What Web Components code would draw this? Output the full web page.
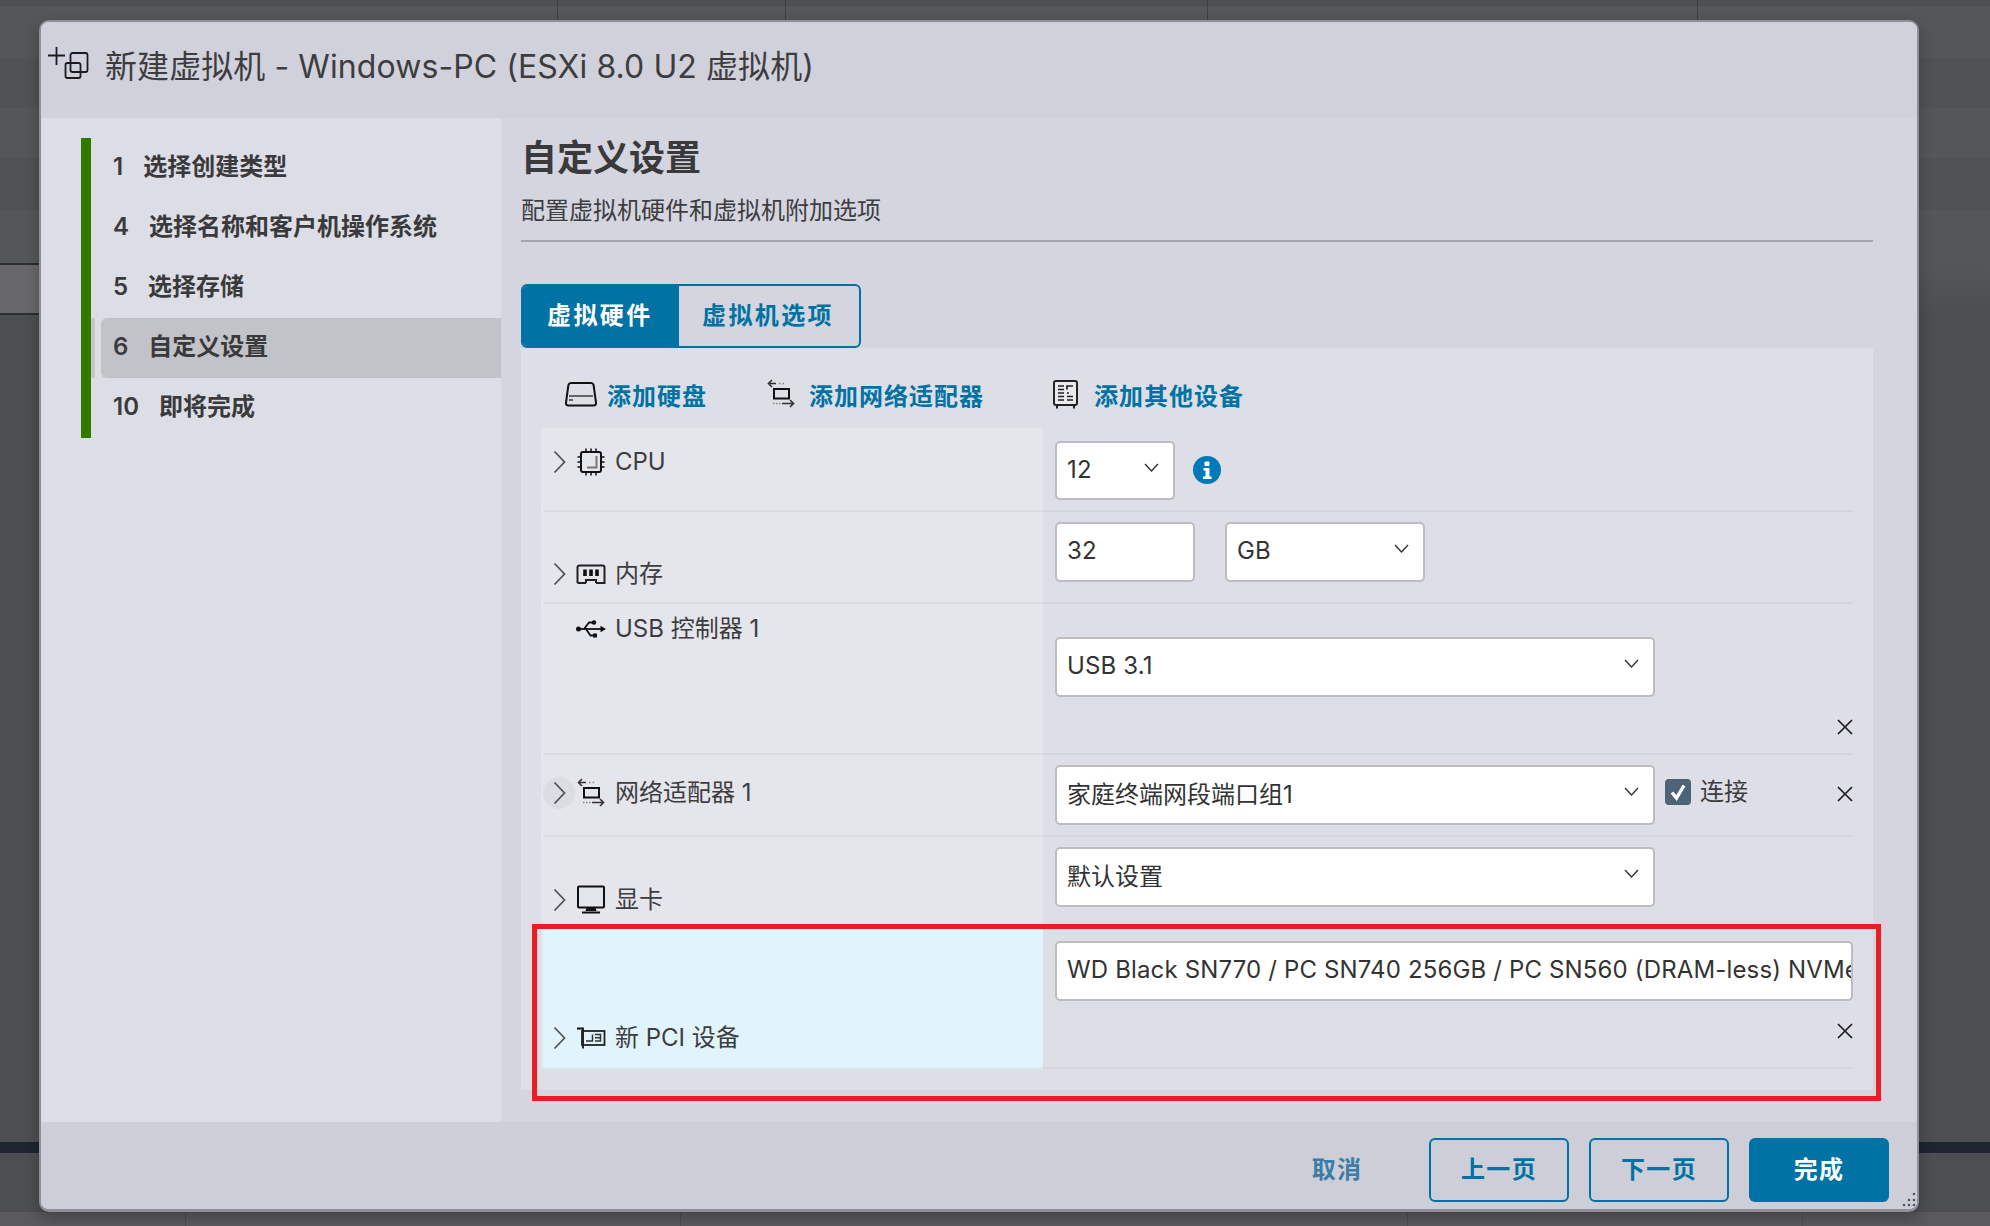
<!DOCTYPE html>
<html lang="zh"><head><meta charset="utf-8"><title>新建虚拟机</title>
<style>html,body{margin:0;padding:0;background:#4d4e52}</style></head>
<body>
<vm-app>
 <vm-dialog>
  <span slot="title">新建虚拟机 - Windows-PC (ESXi 8.0 U2 虚拟机)</span>
  <wizard-steps slot="steps">
   <wizard-step num="1">选择创建类型</wizard-step>
   <wizard-step num="4">选择名称和客户机操作系统</wizard-step>
   <wizard-step num="5">选择存储</wizard-step>
   <wizard-step num="6" active>自定义设置</wizard-step>
   <wizard-step num="10">即将完成</wizard-step>
  </wizard-steps>
  <hw-panel>
   <tool-link slot="tools" style="margin-left:24px;--ig:10px"><vm-icon slot="icon" name="disk" style="--w:32px;--h:26px"></vm-icon>添加硬盘</tool-link>
   <tool-link slot="tools" style="margin-left:59px;--ig:13px"><vm-icon slot="icon" name="net" style="--w:30px;--h:30px"></vm-icon>添加网络适配器</tool-link>
   <tool-link slot="tools" style="margin-left:69px;--ig:16px"><vm-icon slot="icon" name="other" style="--w:25px;--h:29px"></vm-icon>添加其他设备</tool-link>

   <hw-row chevron style="--h:84px;--lt:18px;--rt:13px">
     <vm-icon slot="icon" name="cpu"></vm-icon><span slot="label">CPU</span>
     <vm-select style="width:120px;height:59px">12</vm-select>
     <vm-icon name="info" style="--w:28px;--h:28px;margin:15px 0 0 18px"></vm-icon>
   </hw-row>
   <hw-row chevron style="--h:92px;--lt:46px;--rt:10px">
     <vm-icon slot="icon" name="mem"></vm-icon><span slot="label">内存</span>
     <vm-select plain style="width:140px;height:60px">32</vm-select>
     <vm-select style="width:200px;height:60px;margin-left:30px">GB</vm-select>
   </hw-row>
   <hw-row style="--h:151px;--lt:9px;--rt:33px">
     <vm-icon slot="icon" name="usb"></vm-icon><span slot="label">USB 控制器 1</span>
     <div style="width:798px;display:flex;flex-direction:column">
       <vm-select style="width:600px;height:60px">USB 3.1</vm-select>
       <close-x style="margin-top:15px"></close-x>
     </div>
   </hw-row>
   <hw-row chevron hover style="--h:82px;--lt:22px;--rt:10px">
     <vm-icon slot="icon" name="net"></vm-icon><span slot="label">网络适配器 1</span>
     <vm-select style="width:600px;height:60px;--pb:5px;--ls:0">家庭终端网段端口组1</vm-select>
     <check-label>连接</check-label>
     <close-x style="margin:14px 0 0 auto;align-self:flex-start"></close-x>
   </hw-row>
   <hw-row chevron style="--h:92px;--lt:47px;--rt:10px">
     <vm-icon slot="icon" name="mon"></vm-icon><span slot="label">显卡</span>
     <vm-select style="width:600px;height:60px;--pb:5px;--ls:0">默认设置</vm-select>
   </hw-row>
   <hw-row chevron highlight style="--h:140px;--lt:93px;--rt:12px">
     <vm-icon slot="icon" name="pci"></vm-icon><span slot="label">新 PCI 设备</span>
     <div style="width:798px;display:flex;flex-direction:column">
       <vm-select plain style="width:798px;height:60px">WD Black SN770 / PC SN740 256GB / PC SN560 (DRAM-less) NVMe SSD</vm-select>
       <close-x style="margin-top:15px"></close-x>
     </div>
   </hw-row>
  </hw-panel>
  <vm-button slot="footer" kind="link" style="margin-right:2px;padding-bottom:5px">取消</vm-button>
  <vm-button slot="footer" kind="outline">上一页</vm-button>
  <vm-button slot="footer" kind="outline">下一页</vm-button>
  <vm-button slot="footer" kind="solid">完成</vm-button>
 </vm-dialog>
 <annot-box></annot-box>
</vm-app>
<script>
const FONT='"Inter","Noto Sans CJK SC","Noto Sans",sans-serif';
function def(name,css,html,extra){
  class E extends HTMLElement{
    constructor(){super();const r=this.attachShadow({mode:'open'});
      r.innerHTML='<style>'+css+'</style>'+(typeof html==='function'?html(this):html);}
    connectedCallback(){ if(extra) extra(this); }
  }
  customElements.define(name,E);
}
const ICONS={
 add:[44,34,`<g fill="none" stroke="#1c1c1f" stroke-width="1.8"><path d="M1 8.5h17M9.5 0v18"/><rect x="23.5" y="6" width="17" height="19" rx="2"/><rect x="18.5" y="16" width="15" height="15" rx="2"/></g>`],
 disk:[32,26,`<path d="M6 2h20q2 0 2.6 2L31 21.5q.3 3-2.5 3H3.500q-2.800 0-2.500-3L3.400 4Q4 2 6 2z" fill="none" stroke="#111" stroke-width="2"/><path d="M4 15h24" stroke="#666" stroke-width="2"/><path d="M4 19h4" stroke="#666" stroke-width="2"/>`],
 net:[30,30,`<g fill="none" stroke="#333" stroke-width="1.6"><path d="M10 4.500H2.500M6 1 2.500 4.500 6 8"/><path d="M13 4.500h1.500M16.500 4.500h1.500" stroke="#888"/><rect x="8" y="10" width="15" height="9.500" stroke="#111" stroke-width="2"/><path d="M7 24.500h1.500M10 24.500h1.500M13 24.500h1.500" stroke="#888"/><path d="M16 24.500h11.500M24 21l3.500 3.500L24 28"/></g>`],
 other:[25,29,`<rect x="1" y="1" width="23" height="24" rx="2" fill="#e9e9ee" stroke="#222" stroke-width="2"/><path d="M4 25v3.500M21 25v3.500" stroke="#222" stroke-width="2"/><path d="M5 6h6M5 9.500h6M5 13h6M5 16.500h6M5 20h6M14 13h2M14 16.500h6M14 20h6M14 9.500V6h6" stroke="#222" stroke-width="1.700" fill="none"/>`],
 cpu:[30,30,`<rect x="5" y="5" width="20" height="20" rx="2" fill="none" stroke="#111" stroke-width="2"/><path d="M10 1.500v3M15 1.500v3M20 1.500v3M10 25v3.500M15 25v3.500M20 25v3.500M1.500 10h3M1.500 15h3M1.500 20h3M25 10h3.500M25 15h3.500M25 20h3.500" stroke="#111" stroke-width="1.500"/><path d="M20.500 9v11.500H11" fill="none" stroke="#777" stroke-width="2"/>`],
 mem:[30,20,`<path d="M1.500 19V3.500q0-2 2-2h23q2 0 2 2V19h-8.500M1.500 19H10" fill="none" stroke="#222" stroke-width="2"/><path d="M10 19v-3h10v3" fill="none" stroke="#222" stroke-width="2"/><path d="M9 5.500v6.500M15 5.500v6.500M21 5.500v6.500" stroke="#111" stroke-width="3.600"/>`],
 usb:[30,20,`<circle cx="2.500" cy="10" r="2.500" fill="#111"/><path d="M3 10h22" stroke="#111" stroke-width="1.800"/><path d="M30 10l-5.500-3.200v6.400z" fill="#111"/><path d="M8 10l5-6.500h4M10 10l4.500 6.500H18" fill="none" stroke="#111" stroke-width="1.800"/><circle cx="18" cy="3.500" r="2.200" fill="#111"/><rect x="17" y="14.500" width="4" height="4" fill="#111"/>`],
 mon:[30,30,`<rect x="2" y="1.500" width="26" height="21" rx="1" fill="none" stroke="#111" stroke-width="2"/><path d="M10.500 23h9l1 3h-11z" fill="#111"/><path d="M6 27.500h18" stroke="#111" stroke-width="2"/>`],
 pci:[30,22,`<path d="M1 1.500h6v20" fill="none" stroke="#111" stroke-width="1.800"/><rect x="6" y="4" width="22.500" height="14" fill="none" stroke="#222" stroke-width="1.800"/><path d="M10 14h6.500V7.500M19 7.500h5.500v6.500H19M19 10.700h5.500" fill="none" stroke="#333" stroke-width="1.500"/>`],
 info:[28,28,`<circle cx="14" cy="14" r="14" fill="#0079b8"/><rect x="11.500" y="5.500" width="5" height="4.500" rx="1" fill="#fff"/><path d="M10.500 12h6v8.500h2V23h-8.500v-2.500h2.500V14.500h-2z" fill="#fff"/>`],
 chev:[13,24,`<path d="M1.500 1.500 11.500 12 1.500 22.500" fill="none" stroke="#555" stroke-width="1.800"/>`],
 down:[15,9,`<path d="M1 1l6.500 7L14 1" fill="none" stroke="#333" stroke-width="1.400"/>`],
 x:[16,16,`<path d="M1 1l14 14M15 1 1 15" stroke="#1c1c1f" stroke-width="1.700" fill="none"/>`],
 check:[26,26,`<rect width="26" height="26" rx="4" fill="#4d6478"/><path d="M7 13.500l4.500 5.500L19 6.500" fill="none" stroke="#fff" stroke-width="3.400"/>`],
 grip:[14,16,`<g fill="#54555c"><circle cx="12" cy="2" r="1.300"/><circle cx="7" cy="8" r="1.300"/><circle cx="12" cy="8" r="1.300"/><circle cx="2" cy="13" r="1.300"/><circle cx="7" cy="13" r="1.300"/><circle cx="12" cy="13" r="1.300"/></g>`]
};
def('vm-icon',':host{display:inline-flex;flex:none;align-items:center;justify-content:center;width:var(--w,30px);height:var(--h,30px)}svg{display:block}',
 h=>{const i=ICONS[h.getAttribute('name')];return `<svg xmlns="http://www.w3.org/2000/svg" width="${i[0]}" height="${i[1]}" viewBox="0 0 ${i[0]} ${i[1]}">${i[2]}</svg>`;});

def('vm-app',`:host{display:block;position:relative;box-sizing:border-box;width:1990px;height:1226px;padding:20px 71px 14px 39px;overflow:hidden;
 font-family:${FONT};font-size:24px;color:#3a3a3c;
 background:
  linear-gradient(#2b2d30,#2b2d30) 0 263px/39px 2px no-repeat,
  linear-gradient(#2b2d30,#2b2d30) 0 313px/39px 2px no-repeat,
  linear-gradient(#68686a,#68686a) 0 265px/39px 48px no-repeat,
  linear-gradient(#1c2530,#1c2530) 0 1142px/100% 11px no-repeat,
  linear-gradient(#3e3f44,#3e3f44) 557px 0/1px 20px no-repeat,
  linear-gradient(#3e3f44,#3e3f44) 785px 0/1px 20px no-repeat,
  linear-gradient(#3e3f44,#3e3f44) 1207px 0/1px 20px no-repeat,
  linear-gradient(#3e3f44,#3e3f44) 1697px 0/1px 20px no-repeat,
  linear-gradient(#4d4e51,#4d4e51) 185px 1212px/1px 14px no-repeat,
  linear-gradient(#4d4e51,#4d4e51) 680px 1212px/1px 14px no-repeat,
  linear-gradient(#4d4e51,#4d4e51) 1407px 1212px/1px 14px no-repeat,
  linear-gradient(#4d4e51,#4d4e51) 1802px 1212px/1px 14px no-repeat,
  linear-gradient(#4e4f53,#4e4f53) 0 0/100% 6px no-repeat,
  linear-gradient(#5a5a5c,#5a5a5c) 0 1212px/100% 14px no-repeat,
  linear-gradient(#55565a 0 57px,#515256 57px 108px,#55565a 108px 158px,#515256 158px 210px,#55565a 210px 263px,#4d4e52 315px);
}`,'<slot></slot>');

def('annot-box',`:host{position:absolute;left:532px;top:924px;width:1349px;height:177px;box-sizing:border-box;border:5px solid #ed1c24;pointer-events:none}`,'');

def('vm-dialog',`:host{display:flex;flex-direction:column;position:relative;box-sizing:border-box;width:1880px;height:1192px;background:#d4d5df;border:2px solid #8f9095;border-bottom-width:3px;border-radius:10px;overflow:hidden;box-shadow:0 6px 14px rgba(0,0,0,.25)}
 header{flex:none;height:96px;box-sizing:border-box;background:#d0d1db;display:flex;align-items:flex-start;padding:25px 0 0 6px;color:#3d3d40}
 .t{font-size:32px;line-height:38px;margin:1px 0 0 14px;letter-spacing:.08px}
 .b{flex:none;height:1004px;display:flex}
 aside{flex:none;width:460px;background:#dcdde5;box-sizing:border-box;padding:20px 0 0 40px}
 main{flex:1;min-width:0;box-sizing:border-box;padding:15px 44px 0 20px;display:flex;flex-direction:column}
 h2{margin:0;font-size:36px;line-height:50px;font-weight:600;color:#3a3a3c}
 p{margin:10px 0 0;font-size:24px;line-height:36px;color:#3d3d40}
 hr{margin:11px 0 0;border:0;height:2px;background:#a3a4ac}
 footer{flex:none;height:88px;box-sizing:border-box;background:#cdced8;padding:16px 28px 0 0;display:flex;justify-content:flex-end;gap:20px}
 .g{position:absolute;right:1px;bottom:1px;display:block}`,
 `<header><vm-icon name="add" style="--w:44px;--h:34px"></vm-icon><div class="t"><slot name="title"></slot></div></header>
  <div class="b"><aside><slot name="steps"></slot></aside>
   <main><h2>自定义设置</h2><p>配置虚拟机硬件和虚拟机附加选项</p><hr><tab-bar></tab-bar><slot></slot></main></div>
  <footer><slot name="footer"></slot></footer><vm-icon class="g" name="grip" style="--w:14px;--h:16px"></vm-icon>`);

def('wizard-steps',`:host{display:block;border-left:10px solid #307a00;height:300px}`,'<slot></slot>');
def('wizard-step',`:host{display:block;height:60px;position:relative}
 .i{display:flex;align-items:center;height:60px;margin-left:10px;padding-left:12px;padding-bottom:2px;box-sizing:border-box;font-weight:600;line-height:32px;color:#3a3a3c;border-radius:6px 0 0 6px}
 .n{margin-right:20px}
 :host([active]) .i{background:#c2c3c9}
 :host([active])::before{content:"";position:absolute;left:0;top:0;bottom:0;width:4px;background:#c5c6cd}`,
 h=>`<div class="i"><span class="n">${h.getAttribute('num')}</span><slot></slot></div>`);

def('tab-bar',`:host{display:flex;margin-top:42px;flex:none;width:340px;height:64px;box-sizing:border-box;border:2px solid #0072a3;border-radius:6px;overflow:hidden;font-weight:600;letter-spacing:2.4px;color:#0072a3}
 div{display:flex;align-items:center;box-sizing:border-box;height:100%;padding-bottom:5px}
 .a{width:156px;padding-left:24px;background:#0072a3;color:#fff}
 .b{flex:1;padding-left:23px}`,`<div class="a">虚拟硬件</div><div class="b">虚拟机选项</div>`);

def('hw-panel',`:host{display:block;width:1352px;height:742px;box-sizing:border-box;padding:0 20px;background:#dddee6;flex:none}
 .tools{display:flex;align-items:center;height:80px;padding-top:12px;box-sizing:border-box}
 .tbl{background:linear-gradient(to right,#e5e5ec 502px,transparent 502px)}`,
 `<div class="tools"><slot name="tools"></slot></div><div class="tbl"><slot></slot></div>`);

def('tool-link',`:host{display:inline-flex;align-items:center;color:#0072a3;font-weight:600;letter-spacing:1px}
 .i{display:inline-flex;margin-right:var(--ig,10px)}`,`<span class="i"><slot name="icon"></slot></span><span><slot></slot></span>`);

def('hw-row',`:host{display:grid;grid-template-columns:500px 810px;height:var(--h);margin-left:2px;box-sizing:border-box}
 .l,.r{box-sizing:border-box;height:100%;border-bottom:2px solid}
 .l{border-color:#dcdce3;padding-top:var(--lt);display:flex;align-items:flex-start}
 .r{border-color:#d4d5dd;padding:var(--rt) 0 0 12px;display:flex;align-items:flex-start;position:relative}
 .c{flex:none;width:32px;height:32px;border-radius:50%;display:flex;align-items:center;justify-content:center;margin-right:1px}
 .c vm-icon{visibility:hidden}
 :host([chevron]) .c vm-icon{visibility:visible}
 :host([hover]) .c{background:#dcdce3}
 :host([highlight]) .l{background:#e1f4fc;border-color:#d7ecf5}
 .ic{display:inline-flex;width:30px;height:32px;align-items:center;justify-content:center}
 .t{margin-left:9px;line-height:32px;color:#3d3d40;white-space:nowrap}`,
 `<div class="l"><span class="c"><vm-icon name="chev" style="--w:13px;--h:24px"></vm-icon></span><span class="ic"><slot name="icon"></slot></span><span class="t"><slot name="label"></slot></span></div>
  <div class="r"><slot></slot></div>`);

def('vm-select',`:host{display:block;flex:none;position:relative;box-sizing:border-box;background:#fff;border:2px solid #bcbcc1;border-radius:5px;color:#333;letter-spacing:var(--ls,.15px)}
 .v{box-sizing:border-box;height:100%;padding:0 0 var(--pb,3px) 10px;display:flex;align-items:center;white-space:nowrap;overflow:hidden}
 .d{position:absolute;right:14px;top:50%;margin-top:-8px;display:block}
 :host([plain]) .d{display:none}`,
 `<span class="v"><slot></slot></span><vm-icon class="d" name="down" style="--w:15px;--h:9px"></vm-icon>`);

def('close-x',`:host{display:block;width:16px;height:16px;align-self:flex-end;flex:none}`,`<vm-icon name="x" style="--w:16px;--h:16px"></vm-icon>`);

def('check-label',`:host{display:inline-flex;flex:none;align-items:center;gap:9px;margin:14px 0 0 10px;line-height:26px;color:#3d3d40}`,
 `<vm-icon name="check" style="--w:26px;--h:26px"></vm-icon><span><slot></slot></span>`);

def('vm-button',`:host{display:flex;align-items:center;justify-content:center;box-sizing:border-box;width:140px;height:64px;padding-bottom:5px;border-radius:6px;font-weight:600;letter-spacing:1.300px}
 :host([kind=outline]){border:2px solid #0072a3;color:#0072a3}
 :host([kind=solid]){background:#0072a3;color:#fff}
 :host([kind=link]){color:#3a7da6}`,`<slot></slot>`);
</script>
</body></html>
